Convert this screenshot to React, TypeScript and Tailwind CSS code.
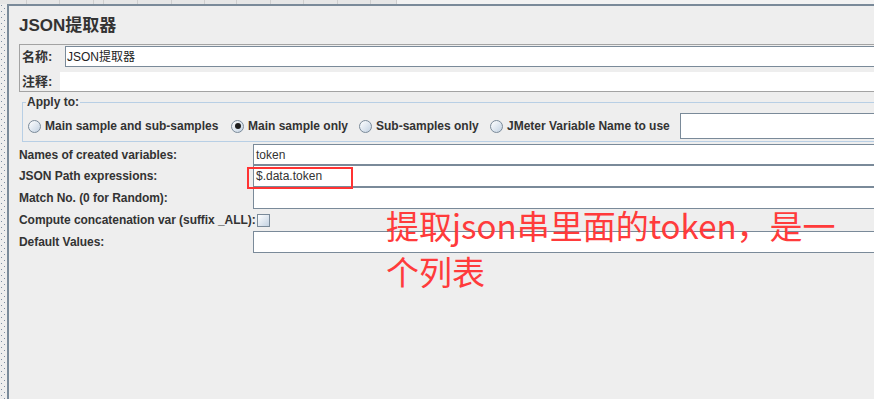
import React from "react";

const topTabs = [27, 33, 34, 10, 34, 34, 33, 32, 34, 33, 34, 33, 26];

function Radio({ label, checked, width }: { label: string; checked?: boolean; width: string }) {
  return (
    <div className={`flex shrink-0 items-center ${width}`}>
      <span className="flex h-[13px] w-[13px] shrink-0 items-center justify-center rounded-full border border-[#7a8a99] bg-linear-to-br from-white to-[#c3d2e2]">
        {checked && <span className="h-[6px] w-[6px] rounded-full bg-[#1e1e1e]" />}
      </span>
      <span className="ml-[4px] whitespace-nowrap text-[12px] font-bold leading-[14px] text-[#333]">{label}</span>
    </div>
  );
}

function Row({ label, value, height, children }: { label: string; value?: string; height: string; children?: React.ReactNode }) {
  return (
    <div className={`flex items-center ${height}`}>
      <div className="w-[234px] shrink-0 whitespace-nowrap text-[12px] font-bold leading-[14px] tracking-[-0.05px] text-[#333]">{label}</div>
      {children ?? (
        <div className={`flex flex-1 items-center border-y border-l border-[#7a8a99] bg-white px-[2px] text-[12px] text-[#333] ${height}`}>
          {value}
        </div>
      )}
    </div>
  );
}

export default function App() {
  return (
    <div className="relative h-[399px] w-[874px] overflow-hidden bg-[#eeeeee] font-['Liberation_Sans','Noto_Sans_CJK_SC',sans-serif]">
      {/* strip of the tab bar above */}
      <div className="flex h-[4px]">
        {topTabs.map((w, i) => (
          <div key={i} className="border-r border-[#cfcfcf] bg-[#e6e6e6]" style={{ width: w }} />
        ))}
        <div className="flex-1 bg-[#f2f2f2]" />
      </div>

      <div className="flex h-[395px]">
        {/* dotted tree edge */}
        <div className="w-[7px] shrink-0">
          <svg width="7" height="395">
            <defs>
              <pattern id="dots" width="7" height="6" patternUnits="userSpaceOnUse">
                <rect x="1" y="1" width="1" height="1" fill="#7e8fa3" />
                <rect x="4" y="4" width="1" height="1" fill="#7e8fa3" />
              </pattern>
            </defs>
            <rect width="7" height="395" fill="url(#dots)" />
          </svg>
        </div>

        <div className="flex-1 border-l-2 border-t-2 border-[#7a8a99] pl-[10px] pt-[10px]">
          <h1 className="text-[17px] font-bold leading-[20px] text-[#333]">JSON提取器</h1>

          {/* name / comment box */}
          <div className="mt-[8px] border-y border-l border-[#a3a3a3] pt-[1px]">
            <div className="flex h-[21px] items-center">
              <div className="w-[45px] shrink-0 pl-[2px] text-[13px] font-bold text-[#333]">名称:</div>
              <div className="flex h-[21px] flex-1 items-center border-y border-l border-[#7a8a99] bg-white px-[1px] text-[12px] text-[#222]">
                JSON提取器
              </div>
            </div>
            <div className="mt-[5px] flex h-[19px] items-center">
              <div className="w-[40px] shrink-0 pl-[2px] text-[13px] font-bold text-[#333]">注释:</div>
              <div className="h-[19px] flex-1 bg-white" />
            </div>
          </div>

          {/* Apply to */}
          <fieldset className="ml-[3px] mt-[3px] border-y border-l border-[#b8cfe5] pb-[2px]">
            <legend className="ml-[3px] px-[1px] text-[12px] font-bold leading-[14px] text-[#333]">Apply to:</legend>
            <div className="flex items-center pl-[5px] pt-[4px]">
              <Radio label="Main sample and sub-samples" width="w-[203px]" />
              <Radio label="Main sample only" checked width="w-[128px]" />
              <Radio label="Sub-samples only" width="w-[131px]" />
              <Radio label="JMeter Variable Name to use" width="w-[190px]" />
              <div className="h-[26px] flex-1 border-y border-l border-[#7a8a99] bg-white" />
            </div>
          </fieldset>

          <div className="mt-[2px] flex flex-col">
            <Row label="Names of created variables:" value="token" height="h-[21px]" />
            <Row label="JSON Path expressions:" value="$.data.token" height="h-[22px]" />
            <Row label="Match No. (0 for Random):" height="h-[22px]" />
            <Row label="Compute concatenation var (suffix _ALL):" height="h-[22px]">
              <div className="ml-[4px] h-[13px] w-[13px] border border-[#7a8a99] bg-linear-to-br from-white to-[#c3d2e2]" />
            </Row>
            <Row label="Default Values:" height="h-[22px]" />
          </div>
        </div>
      </div>

      {/* red highlight around the path expression */}
      <div className="absolute left-[247px] top-[167px] h-[22px] w-[106px] border-2 border-[#ff3333]" />

      {/* annotation */}
      <div className="absolute left-[386px] top-[202px] font-['Noto_Sans_CJK_SC',sans-serif] text-[33px] leading-[46px] text-[#ff3b3b]">
        <div className="whitespace-nowrap">提取json串里面的token，是一</div>
        <div className="whitespace-nowrap">个列表</div>
      </div>
    </div>
  );
}
